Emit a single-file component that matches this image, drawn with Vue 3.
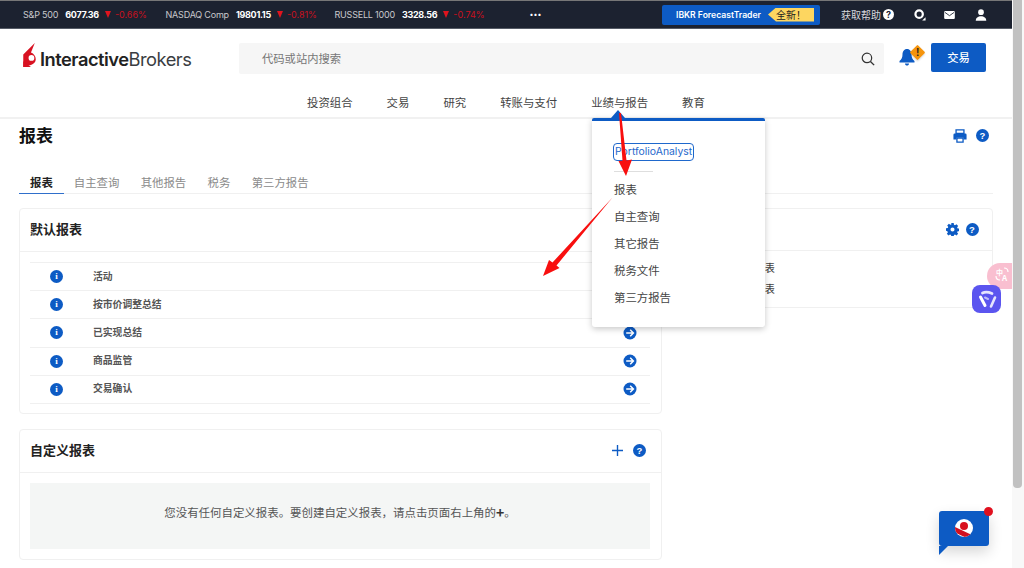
<script setup>
const tickers = [
  { name: 'S&P 500', value: '6077.36', change: '-0.66%' },
  { name: 'NASDAQ Comp', value: '19801.15', change: '-0.81%' },
  { name: 'RUSSELL 1000', value: '3328.56', change: '-0.74%' },
]
const navItems = ['投资组合', '交易', '研究', '转账与支付', '业绩与报告', '教育']
const tabs = ['报表', '自主查询', '其他报告', '税务', '第三方报告']
const reports = ['活动', '按市价调整总结', '已实现总结', '商品监管', '交易确认']
const menuItems = ['报表', '自主查询', '其它报告', '税务文件', '第三方报告']
</script>

<template>
  <div class="page">
    <div class="main">
      <div class="topbar">
        <div class="tickers">
          <div v-for="t in tickers" :key="t.name" class="ticker">
            <span class="t-name">{{ t.name }}</span>
            <b class="t-val">{{ t.value }}</b>
            <span class="t-down"></span>
            <span class="t-chg">{{ t.change }}</span>
          </div>
          <span class="dots">•••</span>
        </div>
        <div class="top-right">
          <div class="forecast">
            <span>IBKR ForecastTrader</span>
            <span class="new-tag">全新！</span>
          </div>
          <span class="help">获取帮助</span>
          <span class="help-q">?</span>
          <svg class="top-icon chat" viewBox="0 0 14 14"><circle cx="6" cy="6" r="4.300" fill="none" stroke="#fff" stroke-width="2.600"/><circle cx="6" cy="5.600" r="1.500" fill="#1c2230"/><path d="M9.500 13.500l4-4v4z" fill="#fff"/></svg>
          <svg class="top-icon mail" viewBox="0 0 16 12"><rect width="16" height="12" rx="1.500" fill="#fff"/><path d="M1 2l7 5 7-5" fill="none" stroke="#1c2230" stroke-width="1.300"/></svg>
          <svg class="top-icon user" viewBox="0 0 16 16"><circle cx="8" cy="4.200" r="3.800" fill="#fff"/><path d="M1 15.500c0-4 3-6 7-6s7 2 7 6z" fill="#fff"/></svg>
        </div>
      </div>

      <div class="header">
        <div class="logo">
          <svg class="logo-mark" viewBox="0 0 14 26"><path d="M0 25V12L12 0 8 10c3 1 5 4 5 7s-2 5-5 6z" fill="#d81222"/><circle cx="8.500" cy="15.500" r="3" fill="#fff"/><path d="M0 19l8 6H0z" fill="#d81222"/></svg>
          <span class="logo-text"><b>Interactive</b>Brokers</span>
        </div>
        <div class="search">
          <span class="search-ph">代码或站内搜索</span>
          <svg class="search-icon" viewBox="0 0 16 16"><circle cx="6.800" cy="6.800" r="5.400" fill="none" stroke="#333" stroke-width="1.400"/><path d="M10.800 10.800l4.200 4.200" stroke="#333" stroke-width="1.600"/></svg>
        </div>
        <div class="bell-wrap">
          <svg class="bell" viewBox="0 0 16 17"><path d="M8 0C5 0 3.500 2.500 3.500 5.500c0 3-1 5-3 6.500v1.500h15V12c-2-1.500-3-3.500-3-6.500C12.500 2.500 11 0 8 0z" fill="#0d5bc4"/><path d="M6 14.500h4c0 1.500-1 2-2 2s-2-.5-2-2z" fill="#0d5bc4"/></svg>
          <span class="warn"><i>!</i></span>
        </div>
        <button class="trade">交易</button>
      </div>

      <div class="nav">
        <span v-for="n in navItems" :key="n" class="nav-item">{{ n }}</span>
      </div>

      <div class="content">
        <div class="title-row">
          <h1>报表</h1>
          <div class="title-icons">
            <svg class="print" viewBox="0 0 16 16"><path d="M3.500 1h9v4h-9z" fill="none" stroke="#0d5bc4" stroke-width="1.500"/><path d="M2 5h12a1.500 1.500 0 011.500 1.500V12H12v-2H4v2H.5V6.500A1.500 1.500 0 012 5z" fill="#0d5bc4"/><path d="M4.500 10.500h7v4.500h-7z" fill="none" stroke="#0d5bc4" stroke-width="1.500"/></svg>
            <span class="q">?</span>
          </div>
        </div>

        <div class="tabs">
          <span v-for="(t, i) in tabs" :key="t" class="tab" :class="{ active: i === 0 }">{{ t }}</span>
        </div>

        <div class="grid">
          <div class="col-left">
            <section class="card">
              <div class="card-head"><h2>默认报表</h2></div>
              <div class="list">
                <div v-for="r in reports" :key="r" class="row">
                  <span class="info">i</span>
                  <span class="row-label">{{ r }}</span>
                  <svg class="go" viewBox="0 0 14 14"><circle cx="7" cy="7" r="6.500" fill="#0d5bc4"/><path d="M3.200 7h7M7.200 3.800L10.400 7l-3.200 3.200" fill="none" stroke="#fff" stroke-width="1.500"/></svg>
                </div>
              </div>
            </section>

            <section class="card custom">
              <div class="card-head">
                <h2>自定义报表</h2>
                <div class="head-icons">
                  <svg class="plus" viewBox="0 0 12 12"><path d="M6 0v12M0 6h12" stroke="#0d5bc4" stroke-width="1.500"/></svg>
                  <span class="q">?</span>
                </div>
              </div>
              <div class="empty-wrap">
                <div class="empty">您没有任何自定义报表。要创建自定义报表，请点击页面右上角的<b>+</b>。</div>
              </div>
            </section>
          </div>

          <section class="card right-card">
            <div class="card-head right-head">
              <div class="head-icons right-icons">
                <svg class="gear" viewBox="0 0 14 14"><path fill="#0d5bc4" fill-rule="evenodd" d="M5.700 0h2.600l.3 1.900 1.100.5 1.600-1.100 1.800 1.800-1.100 1.600.5 1.100 1.900.3v2.600l-1.900.3-.5 1.100 1.100 1.600-1.800 1.800-1.600-1.100-1.100.5-.3 1.900H5.700l-.3-1.900-1.100-.5-1.600 1.100-1.800-1.800 1.100-1.600-.5-1.100L0 8.300V5.700l1.900-.3.5-1.100-1.100-1.600 1.800-1.800 1.600 1.100 1.100-.5zM7 4.800a2.200 2.200 0 100 4.400 2.200 2.200 0 000-4.400z"/></svg>
                <span class="q">?</span>
              </div>
            </div>
            <div class="right-list">
              <div class="right-row">表</div>
              <div class="right-row">表</div>
            </div>
          </section>
        </div>
      </div>
    </div>

    <div class="scrollbar"><div class="thumb"></div></div>

    <div class="dropdown">
      <span class="caret"></span>
      <span class="pa">PortfolioAnalyst</span>
      <span class="menu-rule"></span>
      <span v-for="m in menuItems" :key="m" class="menu-item">{{ m }}</span>
    </div>

    <div class="translate">
      <span class="tr-a">中</span><span class="tr-b">A</span>
      <svg viewBox="0 0 25 26"><path d="M17 5c2.500 0 4 1 4 4M9 13c0 2.500 1 4 4 4" fill="none" stroke="#fff" stroke-width="1.200"/></svg>
    </div>
    <div class="assistant">
      <svg viewBox="0 0 29 28">
        <g fill="none" stroke="#fff" stroke-linecap="round">
          <path d="M10.500 8c3-1.500 6-1 9.500 .5" stroke-width="2.800" opacity=".85"/>
          <path d="M8.500 12l4.500 8.500" stroke-width="3"/>
          <path d="M23 12.500l-4 9" stroke-width="2.600" opacity=".85"/>
          <path d="M13 12.500l3 1.500" stroke-width="2" opacity=".6"/>
        </g>
      </svg>
    </div>

    <div class="chat-fab">
      <span class="fab-dot"></span>
      <span class="fab-logo"><i></i></span>
      <span class="fab-tail"></span>
    </div>

    <svg class="arrows" viewBox="0 0 1024 568">
      <path d="M619 113L621 113L626.500 160.500L632 159.500L626 176L618.500 161L622.500 160.800z" fill="#f80f0f"/>
      <path d="M612.500 197.500L556.500 265.500L559.500 268L543 276L549 260L552.500 262.500z" fill="#f80f0f"/>
    </svg>
  </div>
</template>

<style scoped>
.page {
  position: relative;
  display: flex;
  width: 1024px;
  height: 568px;
  overflow: hidden;
  background: #fff;
  font-family: "Noto Sans CJK SC", "Noto Sans", sans-serif;
  color: #333;
}
.main { width: 1012px; flex: none; }
.topbar {
  height: 29px;
  box-sizing: border-box;
  background: #1c2230;
  border-top: 1px solid #777;
  border-bottom: 1px solid #555b66;
  display: flex;
  justify-content: space-between;
  align-items: center;
  color: #fff;
  font-family: "Inter", "Noto Sans CJK SC", sans-serif;
  font-size: 9px;
}
.tickers { display: flex; align-items: center; padding-left: 23px; }
.ticker { display: flex; align-items: center; width: 142.500px; flex: none; white-space: nowrap; }
.ticker:nth-child(2) { width: 169px; }
.ticker:nth-child(3) { width: 198px; }
.t-name { color: #c8c8cc; letter-spacing: -.2px; margin-right: 7px; }
.t-val { font-weight: 700; letter-spacing: -.3px; margin-right: 6px; }
.t-down { width: 0; height: 0; border-left: 3px solid transparent; border-right: 3px solid transparent; border-top: 7px solid #e0141e; margin-right: 4px; }
.t-chg { color: #c8101e; }
.dots { font-size: 7px; letter-spacing: 0; margin-left: -3px; }
.top-right { display: flex; align-items: center; }
.forecast {
  width: 158px;
  height: 20px;
  margin-right: 21px;
  background: #0d5bc4;
  border-radius: 2px;
  display: flex;
  align-items: center;
  justify-content: space-between;
  padding: 0 6px 0 14px;
  box-sizing: border-box;
  font-size: 8.600px;
  font-weight: 600;
  white-space: nowrap;
}
.new-tag {
  height: 14px;
  width: 46px;
  flex: none;
  background: #fdd660;
  color: #222;
  font-size: 10px;
  line-height: 14px;
  text-align: center;
  font-weight: 400;
  clip-path: polygon(8px 0, 100% 0, 100% 100%, 8px 100%, 0 50%);
  font-family: "Noto Sans CJK SC", sans-serif;
}
.help { color: #d8d8dc; font-size: 10px; font-family: "Noto Sans CJK SC", sans-serif; margin-right: 2px; }
.help-q {
  width: 11px; height: 11px; border-radius: 50%; background: #fff; color: #1c2230;
  font-size: 9px; line-height: 11px; text-align: center; font-weight: 700; margin-right: 20px;
}
.top-icon { display: block; flex: none; }
.chat { width: 12px; height: 12px; margin-right: 18px; }
.mail { width: 11px; height: 8px; margin-right: 20px; }
.user { width: 12px; height: 12px; margin-right: 25px; }

.header { height: 56px; position: relative; display: flex; align-items: flex-start; padding-top: 14px; box-sizing: border-box; }
.logo { width: 239px; flex: none; padding-left: 23px; box-sizing: border-box; display: flex; align-items: flex-start; }
.logo-mark { width: 14px; height: 25px; margin-right: 3px; display: block; flex: none; }
.logo-text { font-family: "Inter", "Liberation Sans", sans-serif; font-size: 18.300px; letter-spacing: -.5px; color: #3a3d42; line-height: 22px; margin-top: 5px; white-space: nowrap; }
.logo-text b { color: #222; font-weight: 600; }
.search {
  width: 645px; height: 31px; flex: none; background: #f6f6f6; border-radius: 2px;
  display: flex; align-items: center; justify-content: space-between;
  padding: 0 9px 0 23px; box-sizing: border-box;
}
.search-ph { font-size: 11.300px; color: #777; margin-top: -2px; }
.search-icon { width: 14px; height: 14px; }
.bell-wrap { position: relative; width: 16px; height: 17px; margin: 6px 0 0 15px; flex: none; }
.bell { width: 16px; height: 17px; display: block; }
.warn { position: absolute; left: 12.500px; top: -2.500px; width: 11px; height: 11px; background: #f5940c; transform: rotate(45deg); border-radius: 1px; display: flex; align-items: center; justify-content: center; box-shadow: 1px 1px 2px rgba(0,0,0,.15); }
.warn i { transform: rotate(-45deg); font-style: normal; font-size: 10px; font-weight: 700; color: #222; line-height: 11px; font-family: "Liberation Sans", sans-serif; }
.trade {
  width: 55px; height: 29px; margin-left: 16px; flex: none; border: 0; border-radius: 2px;
  background: #0d5bc4; color: #fff; font: 500 11.300px "Noto Sans CJK SC", sans-serif; padding: 0 0 2px;
}

.nav {
  height: 34px; box-sizing: border-box; border-bottom: 2px solid #f1f1f1;
  display: flex; gap: 34px; padding: 7px 0 0 307px;
}
.nav-item { font-size: 11.400px; line-height: 20px; color: #444; white-space: nowrap; }

.content { padding: 0 19px; }
.title-row { display: flex; justify-content: space-between; height: 42px; }
h1 { margin: 2px 0 0; font-size: 17px; line-height: 27px; font-weight: 700; color: #111; }
.title-icons { display: flex; align-items: center; gap: 9px; height: 13px; margin: 10px 4px 0 0; }
.print { width: 14px; height: 14px; display: block; }
.q {
  display: block; width: 13px; height: 13px; border-radius: 50%; background: #0d5bc4; color: #fff;
  font: 700 9.500px/13px "Liberation Sans", sans-serif; text-align: center; flex: none;
}
.tabs { display: flex; height: 33px; box-sizing: border-box; border-bottom: 1px solid #f0f0f0; }
.tab { font-size: 11.400px; line-height: 21px; padding-top: 11px; color: #8a8a8a; margin-right: 21.300px; white-space: nowrap; height: 32px; box-sizing: border-box; }
.tab.active { color: #222; font-weight: 700; padding: 11px 11px 0; margin-right: 10px; border-bottom: 1px solid #2f6fcb; height: 33px; }

.grid { display: flex; gap: 17px; margin-top: 14px; align-items: flex-start; }
.col-left { width: 643px; flex: none; display: flex; flex-direction: column; gap: 15px; }
.card { border: 1px solid #f0f0f0; border-radius: 4px; box-sizing: border-box; background: #fff; }
.card-head { height: 43px; box-sizing: border-box; border-bottom: 1px solid #f0f0f0; padding: 0 15px 3px 10px; display: flex; align-items: center; justify-content: space-between; }
h2 { margin: 0; font-size: 13px; font-weight: 700; color: #222; }
.list { padding: 10px 11px 9px 10px; }
.row { height: 28.200px; box-sizing: border-box; border-top: 1px solid #f0f0f0; display: flex; align-items: center; }
.row:last-child { border-bottom: 1px solid #f0f0f0; height: 29px; }
.info { width: 13px; height: 13px; border-radius: 50%; background: #0d5bc4; color: #fff; font: 700 9px/13px "Liberation Serif", serif; text-align: center; margin-left: 20px; flex: none; }
.row-label { margin-left: 30px; font-size: 9.800px; font-weight: 700; color: #555; flex: 1; margin-top: -2px; }
.go { width: 14px; height: 14px; margin-right: 13px; flex: none; }
.custom { height: 131px; }
.head-icons { display: flex; align-items: center; gap: 10px; margin-top: 3px; }
.plus { width: 11px; height: 11px; display: block; }
.empty-wrap { padding: 10px 11px 10px 10px; }
.empty { height: 66px; background: #f4f6f5; display: flex; align-items: center; justify-content: center; font-size: 11.450px; color: #555; padding-bottom: 7px; box-sizing: border-box; }
.empty b { font-weight: 700; color: #333; font-size: 14px; line-height: 16px; }

.right-card { width: 314px; flex: none; height: 100px; }
.right-head { justify-content: flex-end; padding-right: 13.500px; height: 42px; }
.right-icons { gap: 7px; margin-top: 2px; }
.gear { width: 13px; height: 13px; display: block; }
.right-list { padding: 7px 0 0 85px; }
.right-row { font-size: 9.800px; line-height: 21px; color: #444; font-weight: 500; }

.scrollbar { width: 12px; flex: none; background: #f8f8f8; padding: 0 2px 0 1px; box-sizing: border-box; }
.thumb { height: 488px; background: #c1c1c1; border-radius: 0 0 4px 4px; }

.dropdown {
  position: absolute; left: 592px; top: 118px; width: 173px; height: 209px; box-sizing: border-box;
  background: #fff; border-top: 3px solid #0d5bc4; border-radius: 2px 2px 3px 3px;
  box-shadow: 0 2px 6px rgba(0,0,0,.22);
  padding: 23px 0 0 22px; display: flex; flex-direction: column; align-items: flex-start;
}
.caret { position: absolute; left: 19px; top: -11px; width: 0; height: 0; border-left: 7px solid transparent; border-right: 7px solid transparent; border-bottom: 8px solid #0d5bc4; }
.pa { font: 10.400px/16px "Inter", sans-serif; color: #1f68cc; outline: 1.500px solid #1f68cc; border-radius: 3px; white-space: nowrap; height: 16px; padding: 0 1px; }
.menu-rule { width: 39px; height: 1px; background: #dedede; margin: 11px 0 4px; }
.menu-item { font-size: 11.400px; line-height: 26.900px; color: #444; }

.translate {
  position: absolute; left: 987px; top: 263px; width: 25px; height: 26px; background: #f9bfd0;
  border-radius: 13px 0 0 13px; color: #fff; font: 700 7px/1 "Noto Sans CJK SC", sans-serif;
}
.translate svg { position: absolute; left: 0; top: 0; width: 25px; height: 26px; }
.tr-a { position: absolute; left: 9px; top: 6px; }
.tr-b { position: absolute; left: 15px; top: 11px; font-size: 8px; }
.assistant {
  position: absolute; left: 972px; top: 285px; width: 29px; height: 28px; background: #5b55ef;
  border-radius: 8px;
}
.assistant svg { width: 29px; height: 28px; display: block; }

.chat-fab {
  position: absolute; left: 939px; top: 511px; width: 50px; height: 35px; background: #0d5bc4;
  border-radius: 3px; box-shadow: 0 6px 14px rgba(0,0,0,.16);
}
.fab-dot { position: absolute; right: -4px; top: -4px; width: 9px; height: 9px; border-radius: 50%; background: #e0101e; }
.fab-logo { position: absolute; left: 16px; top: 8px; width: 18px; height: 18px; border-radius: 50%; background: #fff; overflow: hidden; }
.fab-logo::after { content: ""; position: absolute; left: -2px; top: 12px; width: 20px; height: 5px; background: #d21020; transform: rotate(25deg); }
.fab-logo i { position: absolute; left: 5px; top: 3px; width: 8px; height: 8px; border-radius: 50%; background: #d8101e; }
.fab-tail { position: absolute; left: 0; top: 35px; width: 0; height: 0; border-top: 9px solid #0d5bc4; border-right: 9px solid transparent; }

.arrows { position: absolute; left: 0; top: 0; width: 1024px; height: 568px; pointer-events: none; }
</style>

<style>
html, body { margin: 0; padding: 0; overflow: hidden; }
</style>
